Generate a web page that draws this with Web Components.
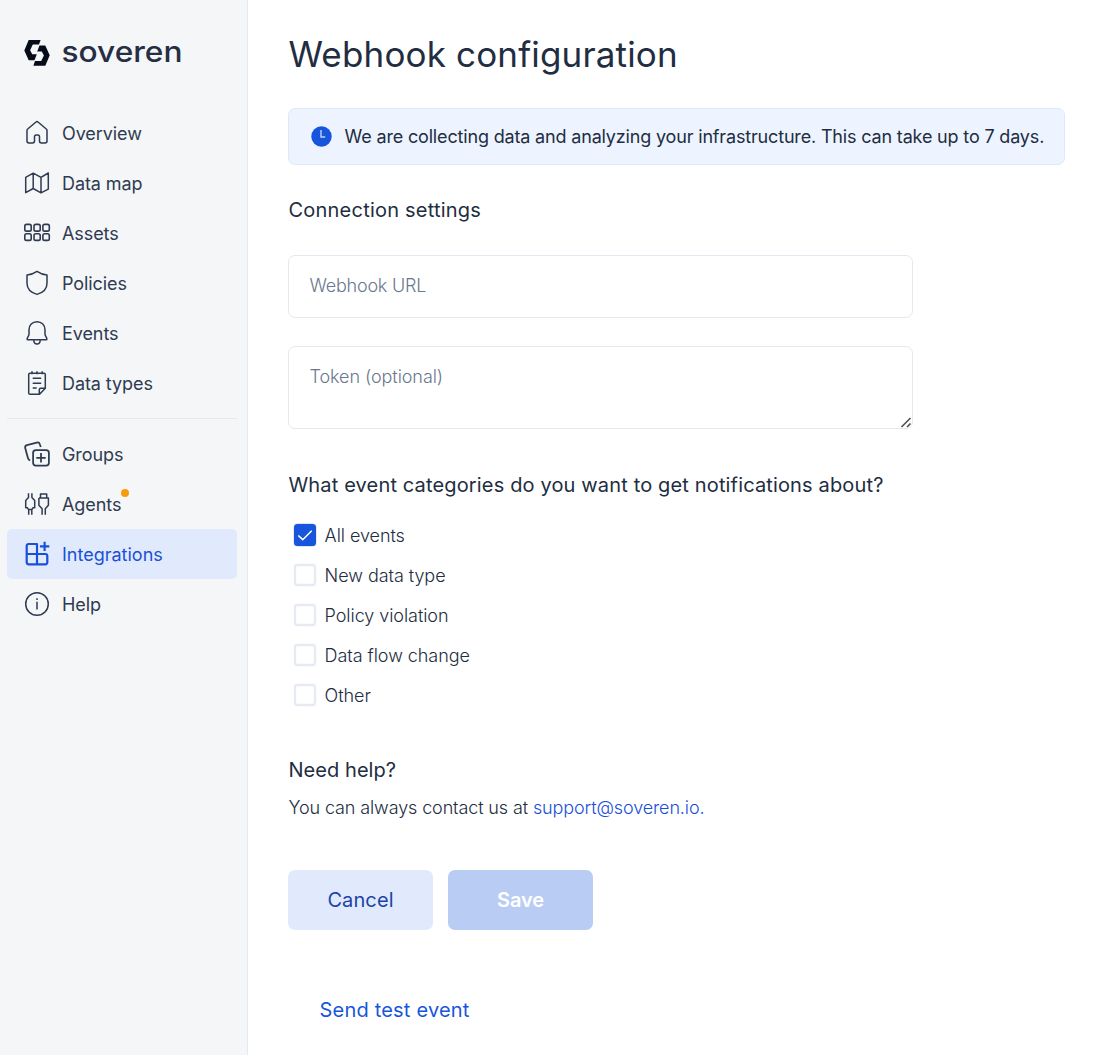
<!DOCTYPE html>
<html lang="en">
<head>
<meta charset="utf-8">
<title>Webhook configuration</title>
<style>
  html, body { margin: 0; height: 100%; }
  body { font-family: Inter, "Liberation Sans", sans-serif; color: #222d41; background: #fff; overflow: hidden; }
</style>
</head>
<body>
<soveren-app></soveren-app>
<script>
function define(name, html) {
  const t = document.createElement('template');
  t.innerHTML = html;
  customElements.define(name, class extends HTMLElement {
    constructor() {
      super();
      this.attachShadow({ mode: 'open' }).append(t.content.cloneNode(true));
    }
  });
}

const ICONS = {
  overview: '<path d="M15 3.6a1.6 1.6 0 0 0-1 .4L5.7 11a1.8 1.8 0 0 0-.7 1.4v10.7c0 1.2.7 1.9 1.9 1.9h3.7c1.2 0 1.9-.7 1.9-1.9v-4.3c0-1.2.6-1.9 1.7-1.9h1.6c1.1 0 1.7.7 1.7 1.9v4.3c0 1.2.7 1.9 1.9 1.9h3.7c1.2 0 1.9-.7 1.9-1.9V12.4a1.8 1.8 0 0 0-.7-1.4L16 4a1.6 1.6 0 0 0-1-.4z"/>',
  map: '<path d="M3.7 9.4 11.2 5.2 19 9.4 26.3 5V21.1L19 24.8 11.2 20.5 3.7 24.7zM11.2 5.2V20.5M19 9.4V24.8"/>',
  assets: '<g stroke-width="1.6"><rect x="2.8" y="6.4" width="6.4" height="6.7" rx="1.7"/><rect x="12" y="6.4" width="6.2" height="6.7" rx="1.7"/><rect x="20.9" y="6.4" width="6.4" height="6.7" rx="1.7"/><rect x="2.8" y="15.7" width="6.4" height="6.7" rx="1.7"/><rect x="12" y="15.7" width="6.2" height="6.7" rx="1.7"/><rect x="20.9" y="15.7" width="6.4" height="6.7" rx="1.7"/></g>',
  shield: '<path d="M15 3.4C12 5.5 8.6 6.7 5 7v8.3C5 21 9 24.7 15 26.4c6-1.7 10-5.4 10-11.1V7c-3.6-.3-7-1.5-10-3.6z"/>',
  bell: '<path d="M15 3.7c-4.8 0-8 3.4-8 8v4.6c0 1.3-1.7 3.2-1.9 4.6 0 .5.2.8.7.8h18.4c.5 0 .7-.3.7-.8-.2-1.4-1.9-3.3-1.9-4.6v-4.6c0-4.6-3.2-8-8-8zM11.8 21.9c0 2.6 1.2 4 3.2 4s3.2-1.4 3.2-4"/>',
  note: '<path d="M23.3 20.2V6.6c0-.8-.5-1.3-1.3-1.3H8c-.8 0-1.3.5-1.3 1.3v18.3c0 .8.5 1.3 1.3 1.3h9.6zM17.3 26.2v-4.5c0-1 .5-1.5 1.5-1.5h4.5M10 3.2v3M15 3.2v3M20.2 3.2v3M10.7 10.3h8.5M10.7 15.3h8.5M10.7 20.1h4"/>',
  groups: '<g stroke-width="1.75"><rect x="11.1" y="11.2" width="15.8" height="15.4" rx="2.8"/><path d="M19 14.1v9.4M14.3 18.8h9.4M8.2 21.3C7 21.1 6.3 20.5 6 19.3L3.2 9c-.4-1.6.1-2.5 1.7-2.9l9.9-2.5c1.6-.4 2.6.1 3 1.6L18.8 8"/></g>',
  agents: '<path d="M6.5 4.3v4.2L3.7 11.6v7.200h1.800l.9 1.700h3.600l.9-1.700h1.800v-7.200L9.900 8.500V4.300M6.700 20.500v5.200M9.800 20.500v5.200M18.500 9V5H24.700V9M16.900 9H26.400V16.200L23.300 19.700V25.700M16.900 9V16.200L20.100 19.700V25.700"/>',
  integrations: '<path stroke-width="2.2" d="M15 15V5H6.7c-1.3 0-2 .7-2 2v16.3c0 1.3.7 2 2 2h16.6c1.3 0 2-.7 2-2V17c0-1.3-.7-2-2-2H4.7M15 15v10.3M22.6 2.7v9.4M17.9 7.4h9.4"/>',
  help: '<circle cx="15" cy="15" r="11.3"/><path d="M15 12.8v7.7M15 9.2v1.7"/>'
};

class NavIcon extends HTMLElement {
  constructor() { super(); this.attachShadow({ mode: 'open' }); }
  connectedCallback() {
    this.shadowRoot.innerHTML = `<style>:host{display:block;width:30px;height:30px}svg{display:block}</style>
      <svg width="30" height="30" viewBox="0 0 30 30" fill="none" stroke="currentColor" stroke-width="1.5" stroke-linejoin="round">${ICONS[this.getAttribute('name')]}</svg>`;
  }
}
customElements.define('nav-icon', NavIcon);

class NavItem extends HTMLElement {
  constructor() { super(); this.attachShadow({ mode: 'open' }); }
  connectedCallback() {
    this.shadowRoot.innerHTML = `<style>
      :host{display:flex;align-items:center;box-sizing:border-box;height:50px;padding-left:15px;gap:10px;border-radius:5px;font-size:18px;line-height:24px;letter-spacing:-.08px;color:#2f3b50}
      :host([active]){background:#e1eafc;color:#1a50d8;letter-spacing:0}
      span{position:relative;padding-top:1px}
      :host([badge]) span::after{content:"";position:absolute;left:59px;top:-3px;width:8px;height:8px;border-radius:50%;background:#f59c0b}
      </style><nav-icon name="${this.getAttribute('icon')}"></nav-icon><span><slot></slot></span>`;
  }
}
customElements.define('nav-item', NavItem);

define('brand-logo', `<style>
  :host{display:flex;height:40px;padding-left:24px}
  svg{display:block;overflow:visible}
  text{font:550 29px Inter,sans-serif}
</style>
<svg width="180" height="40" viewBox="0 -5 180 40">
  <path fill="#070d18" d="M4.7 2H16.6L15 6.6H8.8L6.1 12.2 8.2 16.3H12.8L10.5 22.3H4.7L.3 12.5z"/>
  <path fill="#070d18" d="M21.3 27.7H9.4L11 23.1H17.2L19.9 17.5 17.8 13.4H13.2L15.5 7.4H21.3L25.7 17.2z"/>
  <text x="37.5" y="24.3" fill="#252e44" textLength="121" lengthAdjust="spacingAndGlyphs">soveren</text>
</svg>`);

define('side-bar', `<style>
  :host{display:flex;flex-direction:column;box-sizing:border-box;width:248px;background:#f5f6f8;border-right:1px solid #e6e9f0;padding-top:33px}
  nav{display:flex;flex-direction:column;padding:35px 10px 0 7px}
  hr{width:100%;height:1px;border:0;margin:10px 0;background:#e5e9f0}
</style>
<brand-logo></brand-logo>
<nav>
  <nav-item icon="overview">Overview</nav-item>
  <nav-item icon="map">Data map</nav-item>
  <nav-item icon="assets">Assets</nav-item>
  <nav-item icon="shield">Policies</nav-item>
  <nav-item icon="bell">Events</nav-item>
  <nav-item icon="note">Data types</nav-item>
  <hr>
  <nav-item icon="groups">Groups</nav-item>
  <nav-item icon="agents" badge>Agents</nav-item>
  <nav-item icon="integrations" active>Integrations</nav-item>
  <nav-item icon="help">Help</nav-item>
</nav>`);

define('info-banner', `<style>
  :host{display:flex;align-items:center;box-sizing:border-box;width:777px;height:57px;padding-left:22px;gap:12.6px;background:#edf4ff;border:1px solid #dfe8fb;border-radius:7px;font-size:18px;line-height:24px;letter-spacing:-.168px;color:#222d41;white-space:nowrap}
</style>
<svg width="21" height="21" viewBox="0 0 21 21"><circle cx="10.5" cy="10.5" r="10.2" fill="#1756dc"/><path d="M10 4v7h4.2" fill="none" stroke="#c3d5f8" stroke-width="1.4"/></svg>
<span><slot></slot></span>`);

class CheckRow extends HTMLElement {
  constructor() { super(); this.attachShadow({ mode: 'open' }); }
  connectedCallback() {
    this.shadowRoot.innerHTML = `<style>
      :host{display:flex;align-items:center;height:40px;padding-left:5px;gap:8px;font-size:18px;line-height:24px;font-weight:300;letter-spacing:-.06px;color:#222d41}
      svg{display:block}
      span{padding-top:2px;margin-left:-.4px}
      </style><svg width="24" height="24" viewBox="0 0 24 24" fill="none">${this.hasAttribute('checked')
        ? '<rect x=".6" y=".6" width="22.8" height="22.8" rx="4" fill="#b9cdf5"/><rect x="1" y="1" width="22" height="22" rx="3.5" fill="#1756dc"/><path d="M5.3 12.5 9.7 16.7 18.7 7.7" stroke="#fff" stroke-width="1.6"/>'
        : '<rect x="2" y="2" width="20" height="20" rx="2.5" stroke="#e6eaf2" stroke-width="2.3"/>'}</svg><span><slot></slot></span>`;
  }
}
customElements.define('check-row', CheckRow);

define('text-field', `<style>
  :host{display:block;box-sizing:border-box;width:625px;height:63px;border:1px solid #e6e8f1;border-radius:7px;padding:18px 20.5px;font-size:18px;line-height:24px;letter-spacing:-.22px;font-weight:300;color:#6a778d;position:relative}
  :host([multiline]){height:83px;letter-spacing:-.07px}
  svg{display:none;position:absolute;right:0;bottom:0}
  :host([multiline]) svg{display:block}
</style><slot></slot><svg width="12" height="12" viewBox="0 0 12 12"><path d="M1.5 11 10.5 2M7 11 10.5 7.5" stroke="#555" stroke-width="1.7"/></svg>`);

define('action-button', `<style>
  :host{display:flex;align-items:center;justify-content:center;width:145px;height:60px;border-radius:7px;background:#e1eafc;color:#1d43a8;font-size:20px;line-height:28px;letter-spacing:.1px}
  :host([primary]){background:#b9ccf4;color:#fff;font-weight:600;letter-spacing:-.1px}
</style><slot></slot>`);

define('soveren-app', `<style>
  :host{display:flex;height:1055px;width:1102px}
  main{display:flex;flex-direction:column;align-items:flex-start;padding-left:40px;white-space:nowrap}
  h1,h2,p{margin:0;font-weight:400;padding-left:.5px}
  h1{font-size:35px;line-height:48px;margin-top:30px;letter-spacing:.16px}
  h2{font-size:20px;line-height:28px}
  info-banner{margin-top:30px}
  .conn{margin-top:31px;letter-spacing:.22px}
  .fields{display:flex;flex-direction:column;gap:28px;margin-top:31px}
  .cats{margin-top:42px;letter-spacing:.15px}
  .checks{display:flex;flex-direction:column;margin-top:16px}
  .help{margin-top:41px;letter-spacing:.05px}
  p{font-size:18px;line-height:24px;font-weight:300;margin-top:12px;letter-spacing:-.12px}
  a{color:#1a50d8}
  .buttons{display:flex;gap:15px;margin-top:50px}
  .send{font-size:20px;line-height:28px;letter-spacing:.2px;color:#1756dc;margin:66px 0 0 31.5px}
</style>
<side-bar></side-bar>
<main>
  <h1>Webhook configuration</h1>
  <info-banner>We are collecting data and analyzing your infrastructure. This can take up to 7 days.</info-banner>
  <h2 class="conn">Connection settings</h2>
  <div class="fields">
    <text-field>Webhook URL</text-field>
    <text-field multiline>Token (optional)</text-field>
  </div>
  <h2 class="cats">What event categories do you want to get notifications about?</h2>
  <div class="checks">
    <check-row checked>All events</check-row>
    <check-row>New data type</check-row>
    <check-row>Policy violation</check-row>
    <check-row>Data flow change</check-row>
    <check-row>Other</check-row>
  </div>
  <h2 class="help">Need help?</h2>
  <p>You can always contact us at <a>support@soveren.io.</a></p>
  <div class="buttons">
    <action-button>Cancel</action-button>
    <action-button primary>Save</action-button>
  </div>
  <div class="send">Send test event</div>
</main>`);
</script>
</body>
</html>
